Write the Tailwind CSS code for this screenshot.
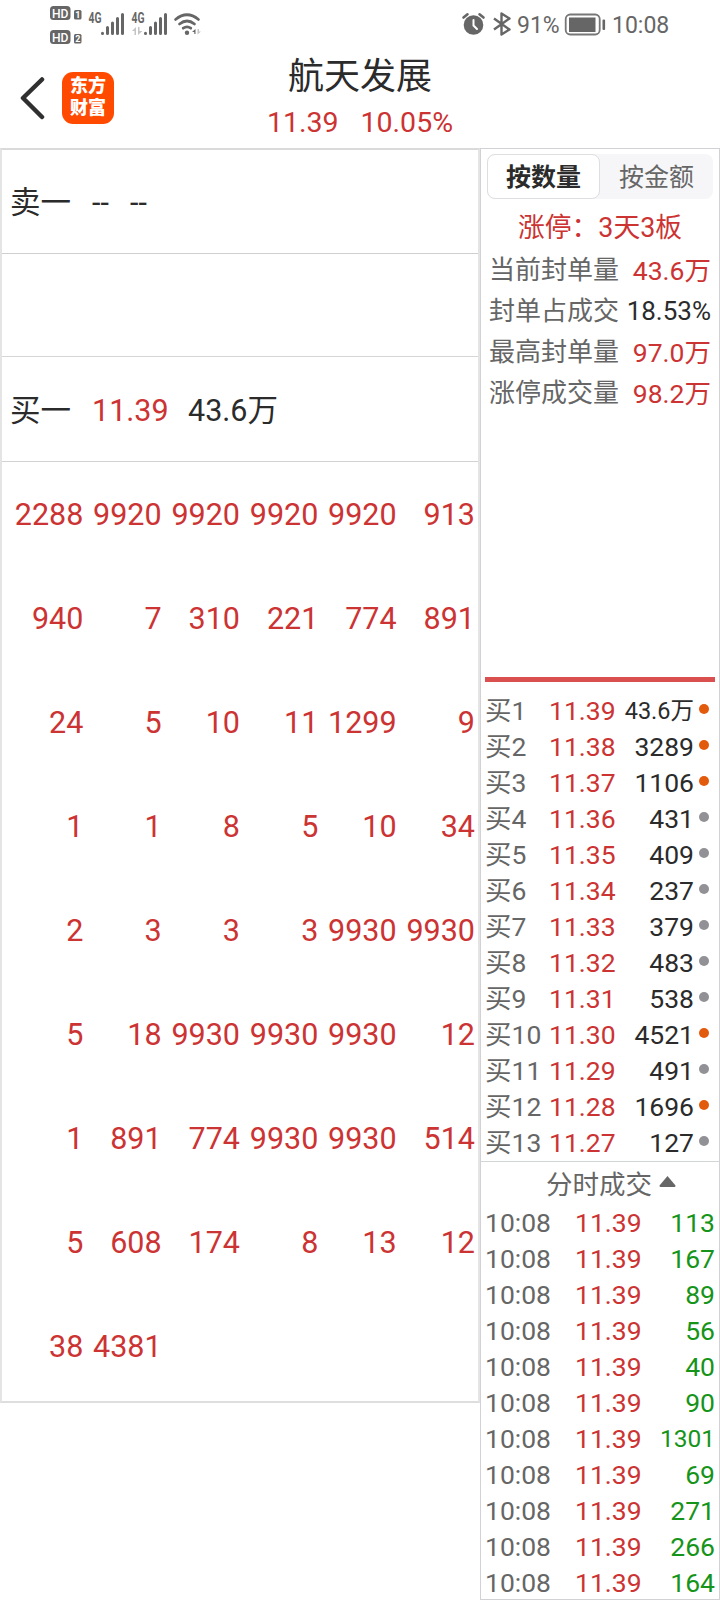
<!DOCTYPE html>
<html lang="zh-CN">
<head>
    <meta charset="UTF-8">
    <meta name="viewport" content="width=device-width, initial-scale=1.0">
    <title>航天发展</title>
    <script src="https://cdn.jsdelivr.net/npm/@tailwindcss/browser@4"></script>
</head>
<body class="bg-white">
    <div class="w-[720px] h-[1600px] overflow-hidden flex flex-col font-[Roboto,'Noto_Sans_CJK_SC',sans-serif] text-[#2b2b2b]">
        <!-- Status bar -->
        <div class="h-[50px] shrink-0">
            <svg width="720" height="50" viewBox="0 0 720 50" fill="#666" font-family="Roboto, sans-serif">
                <rect x="50" y="6" width="20.5" height="14" rx="3.5" />
                <text x="52" y="17.7" font-size="13.5" font-weight="500" fill="#fff" textLength="16.5" lengthAdjust="spacingAndGlyphs">HD</text>
                <rect x="74" y="10" width="7.5" height="9.5" rx="1.5" />
                <text x="75.3" y="18" font-size="9" font-weight="700" fill="#fff">1</text>
                <rect x="50" y="30" width="20.5" height="14" rx="3.5" />
                <text x="52" y="41.7" font-size="13.5" font-weight="500" fill="#fff" textLength="16.5" lengthAdjust="spacingAndGlyphs">HD</text>
                <rect x="74" y="34" width="7.5" height="9.5" rx="1.5" />
                <text x="75.3" y="42" font-size="9" font-weight="700" fill="#fff">2</text>

                <!-- Signal, SIM 1 and SIM 2 -->
                <text x="88.5" y="23" font-size="14" font-weight="700" textLength="13" lengthAdjust="spacingAndGlyphs">4G</text>
                <path d="M102.5 33.2v.2M107.5 27.5v6M112.5 23v10.5M117.5 18.5v15M122.5 14.5v19" stroke="#666" stroke-width="3" stroke-linecap="round" />
                <text x="131.5" y="23" font-size="14" font-weight="700" textLength="13" lengthAdjust="spacingAndGlyphs">4G</text>
                <path d="M145.5 33.2v.2M150.5 27.5v6M155.5 23v10.5M160.5 18.5v15M165.5 14.5v19" stroke="#666" stroke-width="3" stroke-linecap="round" />
                <path d="M132 31l4-4v8h-1.500v-4zM138 27h1.500v4h3l-4.500 4z" fill="#c4c4c4" />

                <!-- Wifi -->
                <path d="M175.5 19.5q11.500-9.500 23 0M179.500 24q7.500-6 15 0M183.200 28.200q3.800-2.800 7.600 0" fill="none" stroke="#666" stroke-width="2.700" stroke-linecap="round" />
                <circle cx="187" cy="32.7" r="2.2" />
                <path d="M192 32l3.500-3v5h-1.200v-2z" />
                <path d="M197.500 29v5.500l3.500-3h-2v-2.500z" fill="#c4c4c4" />

                <!-- Alarm -->
                <circle cx="473.5" cy="25" r="9.8" />
                <path d="M463.500 17.500l4-3.200M483.500 17.500l-4-3.200" stroke="#666" stroke-width="2.600" stroke-linecap="round" />
                <path d="M473.500 20v5.500l3.500 3.500" fill="none" stroke="#fff" stroke-width="2" stroke-linecap="round" />
                <!-- Bluetooth -->
                <path d="M494 18.500l15.500 11-8 5V13.500l8 5-15.500 11" fill="none" stroke="#666" stroke-width="2.400" stroke-linejoin="round" />
                <text x="517" y="32.7" font-size="23">91%</text>
                <!-- Battery -->
                <rect x="565.7" y="14.5" width="34" height="20" rx="4.5" fill="none" stroke="#777" stroke-width="1.8" />
                <rect x="569" y="17.5" width="26.5" height="14.5" />
                <rect x="602.5" y="19.5" width="2.6" height="10.5" rx="1" />
                <text x="612" y="32.7" font-size="23">10:08</text>
            </svg>
        </div>

        <!-- Title bar -->
        <div class="relative h-[98px] shrink-0 text-center pt-[3px]">
            <div class="absolute left-5 top-[22px] flex items-center">
                <svg width="26" height="52" viewBox="0 0 26 52" fill="none" stroke="#303030" stroke-width="4.5" stroke-linecap="round">
                    <path d="M22 7.500L3 26l19 19" stroke-linejoin="round" />
                </svg>
                <div class="ml-4 size-[52px] rounded-[11px] bg-[#ff4a00] text-white text-[18px] leading-[22px] font-black pt-[3px]">东方<br>财富</div>
            </div>
            <h1 class="text-[36px] leading-[49px]">航天发展</h1>
            <p class="flex justify-center gap-[22px] text-[28.5px] leading-[41px] text-[#cc3333]"><span>11.39</span><span>10.05%</span></p>
        </div>

        <div class="flex grow min-h-0 items-start">
            <!-- Order queue -->
            <div class="w-[480px] h-[1255px] border-2 border-[#e4e4e4] border-t-[#dadada] border-b-[#dedede] text-[30.5px]">
                <div class="h-[104px] flex items-center pt-[3px] pl-2 border-b border-[#cfcfcf]"><span class="w-[82px]">卖一</span><span class="w-[38px]">--</span><span>--</span></div>
                <div class="h-[103px] border-b border-[#d6d6d6]"></div>
                <div class="h-[105px] flex items-center pt-[3px] pl-2 border-b border-[#d2d2d2]"><span class="w-[82px]">买一</span><span class="w-[96px] text-[#cc3333]">11.39</span><span>43.6万</span></div>
                <div id="queue" class="grid grid-cols-6 pt-px px-[3px] text-right leading-[104px] text-[#cc3333]"></div>
            </div>

            <!-- Side panel -->
            <div class="w-[240px] h-[1452px] border border-[#d2d2d6] flex flex-col overflow-hidden">
                <div class="mt-[5px] ml-[6px] w-[226px] h-[45px] shrink-0 flex rounded-lg bg-[#f6f6f9] text-[25px] leading-[47px] text-center">
                    <div class="w-[113px] rounded-lg border border-[#dedee2] bg-white font-bold leading-[46px]">按数量</div>
                    <div class="w-[113px] text-[#666]">按金额</div>
                </div>
                <div class="h-[46px] mt-[5px] shrink-0 text-center text-[26.8px] leading-[49px] text-[#cc3333]">涨停：3天3板</div>
                <div id="stats" class="h-[427px] shrink-0 pl-2 pr-[8px] text-[26px] leading-[41px] text-[#666]"></div>
                <div class="mx-1 h-[5px] shrink-0 bg-[#d9504f]"></div>
                <div id="bids" class="pt-[11px] h-[480px] shrink-0 pl-1 border-b border-[#cfd6d4] text-[26.5px] leading-[36px]"></div>
                <div class="h-[43px] shrink-0 pt-[2px] pl-[22px] flex items-center justify-center gap-[7px] text-[26.5px] text-[#666]">
                    分时成交
                    <svg class="mb-[5px]" width="17" height="12" viewBox="0 0 17 12" fill="#666"><path d="M8.500 0l8 9.500q0 1.500-1 1.500h-14q-1 0-1-1.500z" /></svg>
                </div>
                <div id="trades" class="pl-1 pr-1 text-[26.5px] leading-[36px]"></div>
            </div>
        </div>
    </div>

    <script>
        const queue = [
            2288, 9920, 9920, 9920, 9920, 913,
            940, 7, 310, 221, 774, 891,
            24, 5, 10, 11, 1299, 9,
            1, 1, 8, 5, 10, 34,
            2, 3, 3, 3, 9930, 9930,
            5, 18, 9930, 9930, 9930, 12,
            1, 891, 774, 9930, 9930, 514,
            5, 608, 174, 8, 13, 12,
            38, 4381
        ];
        document.getElementById('queue').innerHTML = queue.map(n => `<span>${n}</span>`).join('');

        const stats = [['当前封单量', '43.6万'], ['封单占成交', '18.53%'], ['最高封单量', '97.0万'], ['涨停成交量', '98.2万']];
        document.getElementById('stats').innerHTML = stats.map(([label, value]) => `
            <div class="h-[41px] flex justify-between">
                <span>${label}</span>
                <span class="${value.endsWith('%') ? 'text-[#2b2b2b]' : 'text-[#cc3333] text-[26.5px]'}">${value}</span>
            </div>`).join('');

        const bids = ['43.6万', 3289, 1106, 431, 409, 237, 379, 483, 538, 4521, 491, 1696, 127];
        document.getElementById('bids').innerHTML = bids.map((volume, i) => `
            <div class="h-[36px] flex items-center">
                <span class="w-[64px] text-[#666] whitespace-nowrap">买${i + 1}</span>
                <span class="w-[69px] text-[#cc3333]">${(11.39 - i / 100).toFixed(2)}</span>
                <span class="w-[76px] text-right whitespace-nowrap ${i ? '' : 'text-[23.5px]'}">${volume}</span>
                <span class="ml-[5px] mb-[4px] size-[10px] rounded-full ${i === 0 || volume > 1000 ? 'bg-[#e25a0c]' : 'bg-[#919196]'}"></span>
            </div>`).join('');

        const trades = [113, 167, 89, 56, 40, 90, 1301, 69, 271, 266, 164];
        document.getElementById('trades').innerHTML = trades.map(volume => `
            <div class="h-[36px] flex">
                <span class="w-[90px] text-[#666]">10:08</span>
                <span class="text-[#cc3333]">11.39</span>
                <span class="grow text-right text-[#16941a] ${volume > 999 ? 'text-[24.5px]' : ''}">${volume}</span>
            </div>`).join('');
    </script>
</body>
</html>
